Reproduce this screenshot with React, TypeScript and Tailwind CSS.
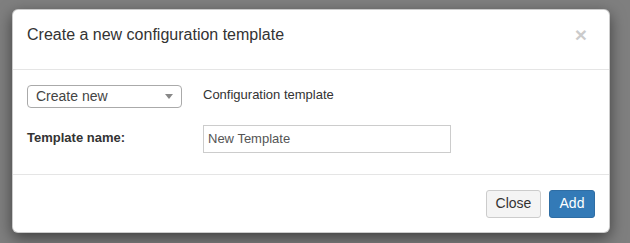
export default function App() {
  return (
    <div className="w-[630px] h-[243px] bg-[#7f7f7f] pt-[9px] pl-[12px] font-['Liberation_Sans',Arial,sans-serif] text-[#333]">
      <div className="w-[598px] h-[224px] bg-white rounded-[6px] border border-black/20 shadow-[0_5px_15px_rgba(0,0,0,0.5)] flex flex-col">
        <div className="h-[60px] border-b border-[#e5e5e5] flex items-center justify-between pl-[14px] pr-[22px] shrink-0">
          <h4 className="text-[16px] leading-none -mt-[10px]">Create a new configuration template</h4>
          <button className="text-[21px] font-bold leading-none text-black opacity-20 -mt-[10px]">×</button>
        </div>
        <div className="flex-1 pl-[14px] pt-[15px] text-[13px]">
          <div className="flex items-center">
            <div className="w-[155px] h-[23px] border border-[#aaa] rounded-[4px] flex items-center justify-between pl-[8px] pr-[8px] text-[14px] text-[#444]">
              <span>Create new</span>
              <span className="w-0 h-0 border-l-[4px] border-r-[4px] border-t-[5px] border-l-transparent border-r-transparent border-t-[#888]" />
            </div>
            <span className="ml-[21px] -mt-[4px]">Configuration template</span>
          </div>
          <div className="flex items-start mt-[17px]">
            <label className="w-[176px] font-bold pt-[3px]">Template name:</label>
            <div className="w-[248px] h-[28px] border border-[#ccc] flex items-center pl-[4px] text-[#555]">New Template</div>
          </div>
        </div>
        <div className="h-[58px] border-t border-[#e5e5e5] flex items-center justify-end gap-[8px] pr-[14px] shrink-0 text-[14px]">
          <button className="w-[55px] h-[28px] bg-[#f4f4f4] border border-[#ccc] rounded-[3px] text-[#333]">Close</button>
          <button className="w-[46px] h-[28px] bg-[#337ab7] border border-[#2e6da4] rounded-[3px] text-white">Add</button>
        </div>
      </div>
    </div>
  );
}
